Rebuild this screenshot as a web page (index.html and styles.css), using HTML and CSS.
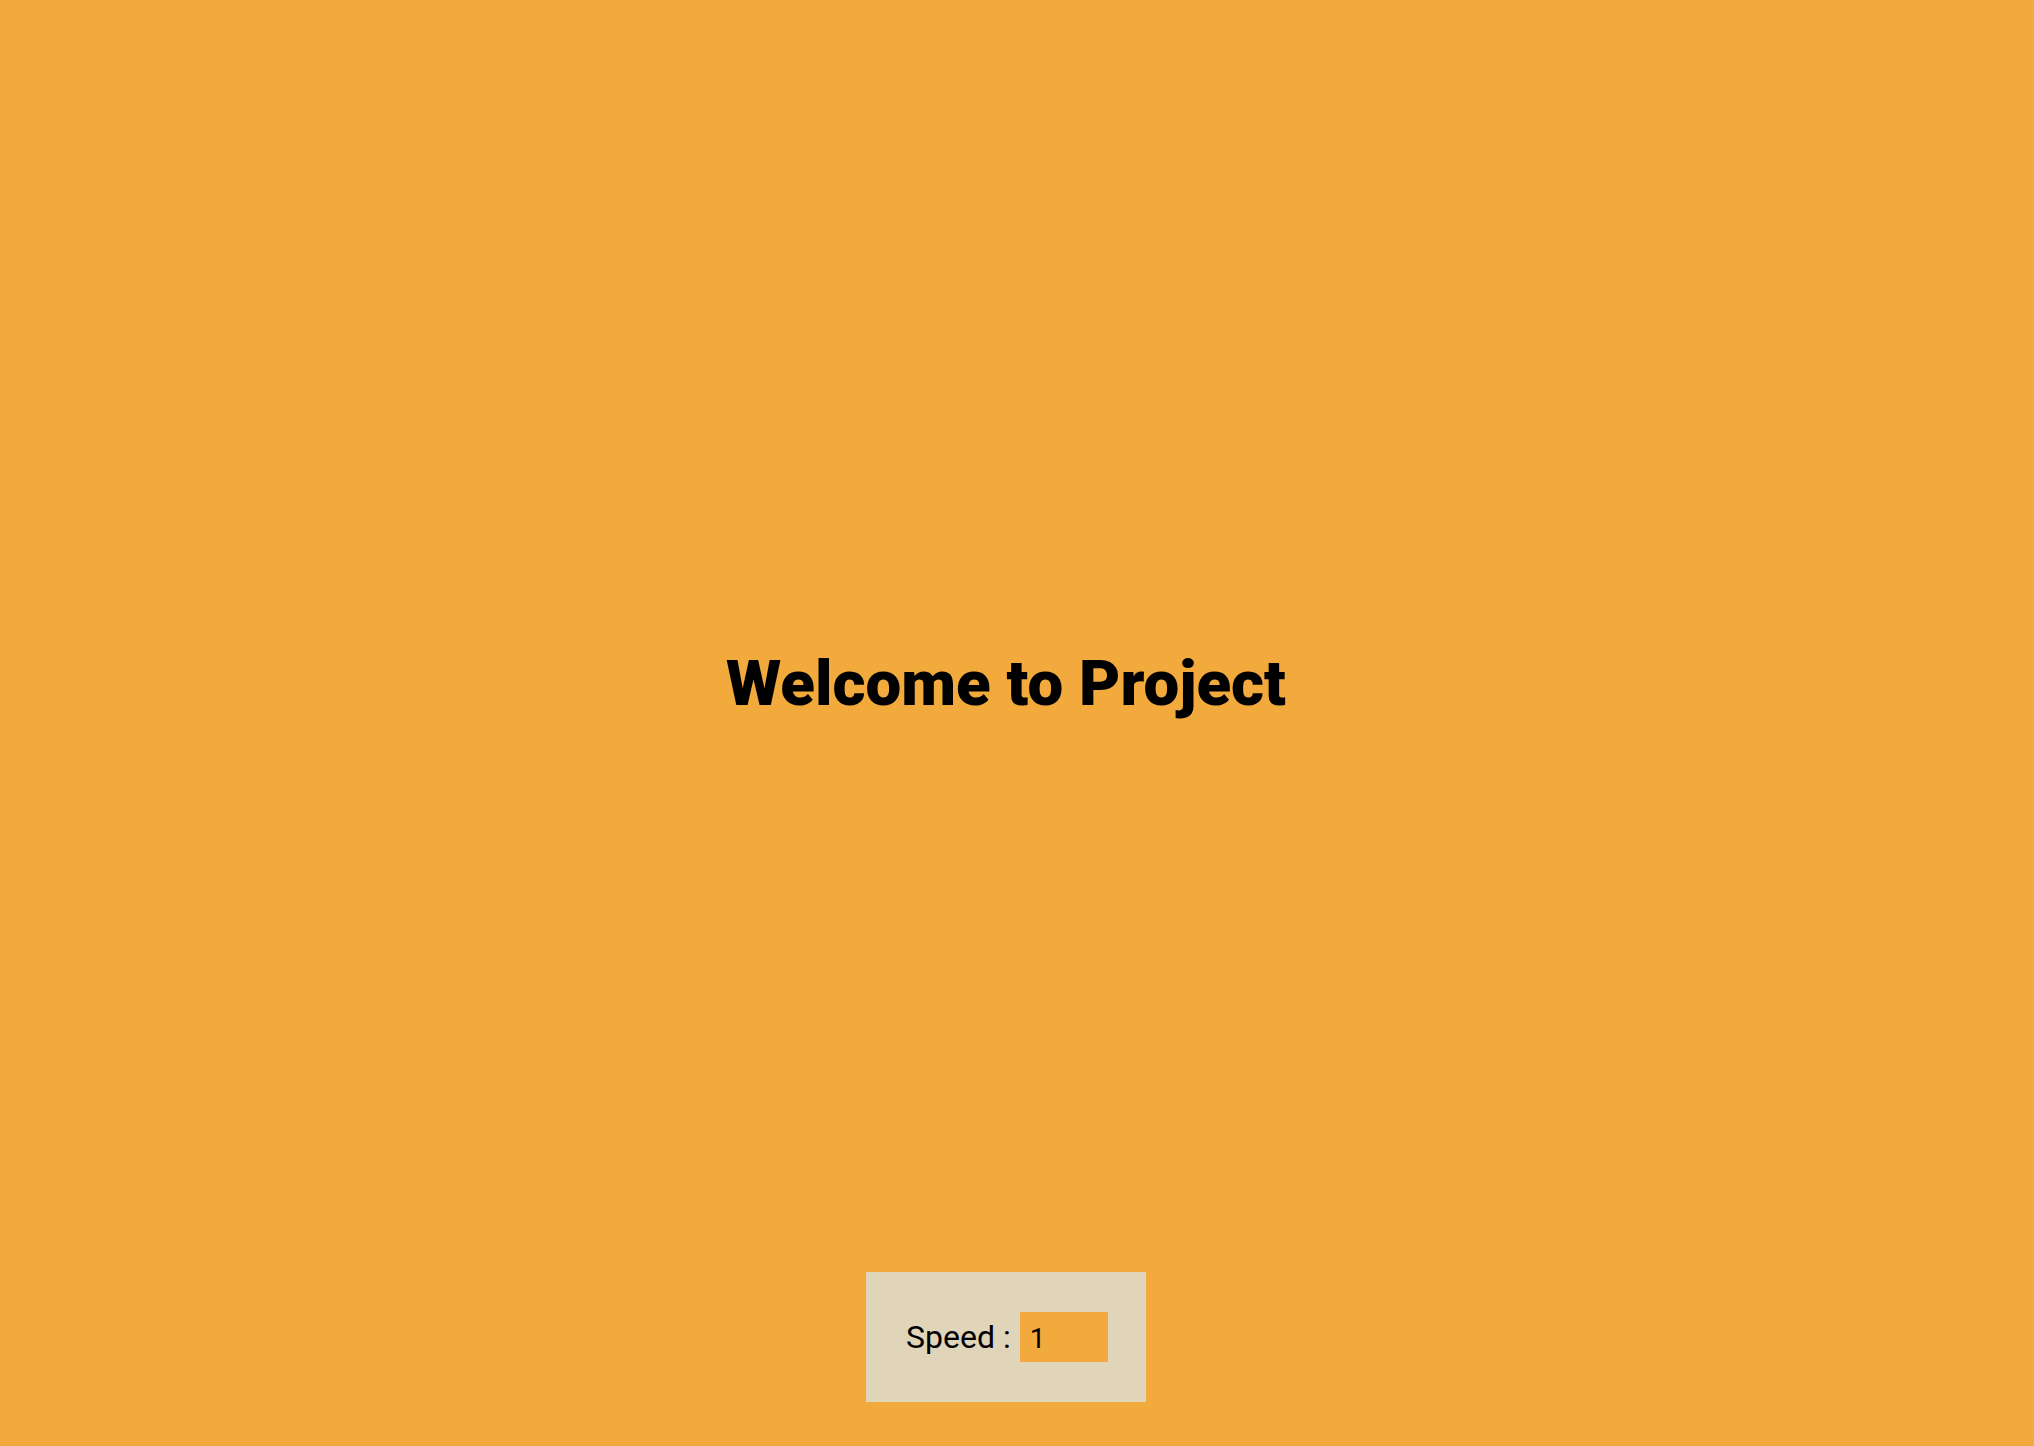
FILE: index.html
```html
<!DOCTYPE html>
<html>
<head>
<meta charset="utf-8">
<link rel="stylesheet" href="styles.css">
</head>
<body>
<div class="page">
  <main class="stage">
    <h1 class="title">Welcome to Project</h1>
  </main>
  <div class="controls">
    <label class="speed-label" for="speed">Speed :</label>
    <input class="speed-input" id="speed" type="text" value="1">
  </div>
</div>
</body>
</html>
```
FILE: styles.css
```css
html, body {
  margin: 0;
  padding: 0;
  height: 100%;
  background: #f2aa3c;
  font-family: Roboto, "Liberation Sans", sans-serif;
  overflow: hidden;
}
.page {
  height: 100vh;
  display: flex;
  flex-direction: column;
  align-items: center;
  padding-right: 22px;
  box-sizing: border-box;
}
.stage {
  flex: 1;
  display: flex;
  align-items: center;
  justify-content: center;
  padding-top: 96px;
}
.title {
  margin: 0;
  font-size: 63.6px;
  font-weight: 900;
  color: #000;
  line-height: 1;
}
.controls {
  background: #e1d5b9;
  width: 280px;
  height: 130px;
  box-sizing: border-box;
  padding: 40px;
  display: flex;
  align-items: center;
  gap: 9px;
  margin-bottom: 44px;
}
.speed-label {
  font-size: 32px;
  color: #000;
  white-space: nowrap;
}
.speed-input {
  width: 88px;
  height: 50px;
  box-sizing: border-box;
  border: none;
  outline: none;
  background: #f2aa3c;
  font-family: Roboto, "Liberation Sans", sans-serif;
  font-size: 28px;
  padding: 2px 10px 0;
  color: #000;
}
```
